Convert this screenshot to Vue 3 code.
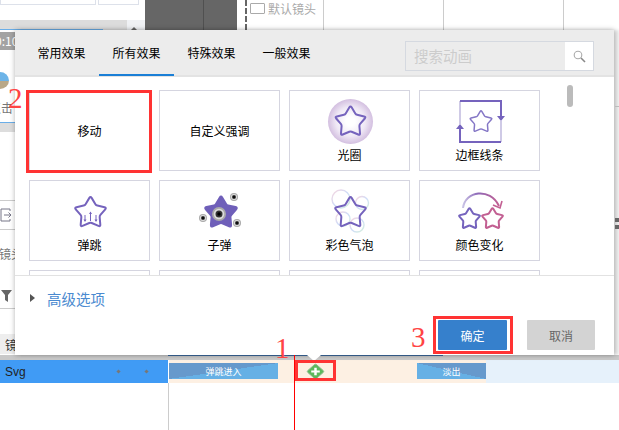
<template>
  <div class="app">
    <!-- page behind the dialog -->
    <div class="bg-top">
      <div class="top-left">
        <div class="top-boxes">
          <span class="box-a"></span>
          <span class="box-b"></span>
        </div>
        <div class="top-bar">
          <span class="bar-gray"><span class="bar-line"></span></span>
          <span class="bar-arrow"></span>
        </div>
      </div>
      <div class="dark-block">
        <span class="dark-a"></span>
        <span class="dark-b"></span>
      </div>
      <div class="dash"></div>
      <div class="cam">
        <span class="cam-icon"></span>
        <span class="cam-text">默认镜头</span>
      </div>
      <div class="ruler">
        <span v-for="n in 3" :key="n" class="ruler-cell"></span>
      </div>
    </div>

    <div class="bg-side">
      <div class="time">0:10</div>
      <div class="avatar"></div>
      <div class="side-txt click">点击</div>
      <div class="side-blue"></div>
      <div class="side-export">
        <svg width="12" height="14" viewBox="0 0 12 14">
          <path d="M10 3V1H1v12h9v-2M4 7h7M8.500 4.500 11 7l-2.500 2.500" fill="none" stroke="#778" stroke-width="1"/>
        </svg>
      </div>
      <div class="side-txt lens">镜头</div>
      <div class="side-filter">
        <svg width="11" height="12" viewBox="0 0 11 12"><path d="M0 0h11L7 5v7L4 10V5z" fill="#666"/></svg>
      </div>
      <div class="side-band">镜</div>
    </div>

    <div class="timeline">
      <div class="tl-shadow"><span class="tl-blue"></span></div>
      <div class="track">
        <div class="track-name">
          <span class="track-label">Svg</span>
          <span class="dot dot-a"></span>
          <span class="dot"></span>
        </div>
        <div class="lane">
          <div class="lane-active">
            <div class="clip clip-in">弹跳进入</div>
            <div class="add-slot">
              <svg width="19" height="17" viewBox="0 0 20 20" preserveAspectRatio="none">
                <rect x="3.500" y="3.500" width="13" height="13" rx="1.500" transform="rotate(45 10 10)" fill="#5cb85c" stroke="#8fb98f"/>
                <path d="M10 5.500v9M5.500 10h9" stroke="#fff" stroke-width="2.600"/>
              </svg>
            </div>
            <div class="clip clip-out">淡出</div>
          </div>
        </div>
      </div>
      <div class="tl-below"></div>
    </div>

    <!-- dialog -->
    <div class="dialog">
      <div class="tabs">
        <div
          v-for="tab in tabs"
          :key="tab"
          class="tab"
          :class="{ active: tab === activeTab }"
        >{{ tab }}</div>
        <div class="search">
          <span class="search-text">搜索动画</span>
          <span class="search-btn">
            <svg width="13" height="13" viewBox="0 0 13 13">
              <circle cx="5" cy="5" r="3.800" fill="none" stroke="#aaa" stroke-width="1.100"/>
              <path d="M8 8l4 4" stroke="#888" stroke-width="1.600"/>
            </svg>
          </span>
        </div>
      </div>

      <div class="body">
        <div class="grid">
          <div v-for="card in cards" :key="card.name + card.type" class="card" :class="{ plain: card.type === 'text' }">
            <svg v-if="card.type !== 'text'" class="icon" width="119" height="57" viewBox="0 0 119 57">
              <defs>
                <radialGradient id="halo">
                  <stop offset="0.2" stop-color="#fff"/>
                  <stop offset="0.65" stop-color="#efe8f5"/>
                  <stop offset="1" stop-color="#d3bfe0"/>
                </radialGradient>
                <linearGradient id="arc" x1="0" y1="0" x2="1" y2="0">
                  <stop offset="0" stop-color="#c9c3e6"/>
                  <stop offset="0.4" stop-color="#8d69b8"/>
                  <stop offset="1" stop-color="#c25f92"/>
                </linearGradient>
                <linearGradient id="bubble" x1="0" y1="0" x2="1" y2="1">
                  <stop offset="0" stop-color="#f8d6de"/>
                  <stop offset="0.5" stop-color="#cfdcf8"/>
                  <stop offset="1" stop-color="#d5f0dc"/>
                </linearGradient>
              </defs>

              <template v-if="card.type === 'halo'">
                <circle cx="60.500" cy="30.500" r="22.500" fill="url(#halo)"/>
                <path :d="star(60.500, 31, 16.500)" class="line"/>
              </template>

              <template v-if="card.type === 'border'">
                <path d="M40 10V33M81 30V51" fill="none" stroke="#cfcae6" stroke-width="2"/>
                <path d="M77 25h8l-4 5zM36 38h8l-4-5z" fill="#7563bd"/>
                <path d="M40 38V51H81M40 10H81V26" class="line" stroke-linejoin="miter"/>
                <path :d="star(61, 31, 12)" class="line thin"/>
              </template>

              <template v-if="card.type === 'bounce'">
                <path :d="star(60.500, 32, 17)" class="line"/>
                <path d="M55 34v6M60.500 31v9M66 34v6" stroke="#7563bd" stroke-width="1"/>
                <path d="M53.500 38.500 55 41l1.500-2.500zM59 33l1.500-2.500L62 33zM64.500 38.500 66 41l1.500-2.500z" fill="#7563bd"/>
              </template>

              <template v-if="card.type === 'bullet'">
                <path :d="star(61, 32, 17.500)" fill="#6f5fb9" stroke="#6f5fb9" stroke-width="2"/>
                <g v-for="h in holes" :key="h.x">
                  <circle :cx="h.x" :cy="h.y" :r="h.r" fill="#aaa"/>
                  <circle :cx="h.x" :cy="h.y" :r="h.r * 0.75" fill="#ddd"/>
                  <circle :cx="h.x" :cy="h.y" :r="h.r * 0.5" fill="#333"/>
                  <circle :cx="h.x" :cy="h.y" :r="h.r * 0.25" fill="#000"/>
                </g>
              </template>

              <template v-if="card.type === 'bubbles'">
                <circle v-for="b in bubbles" :key="b.x" :cx="b.x" :cy="b.y" :r="b.r" fill="#fff" fill-opacity="0.3" stroke="url(#bubble)" stroke-width="1.400"/>
                <path :d="star(60.500, 32, 17)" class="line"/>
              </template>

              <template v-if="card.type === 'color'">
                <path d="M43 27C45 10 70 6 79 25" fill="none" stroke="url(#arc)" stroke-width="2"/>
                <path d="M73 24l7 3 2-7" fill="none" stroke="#c25f92" stroke-width="1.600"/>
                <path :d="star(49.500, 38, 11.500)" class="line"/>
                <path :d="star(72.500, 38, 11.500)" class="line pink"/>
              </template>
            </svg>
            <span class="card-name">{{ card.name }}</span>
          </div>
        </div>
        <div class="scrollbar"></div>
      </div>

      <div class="footer">
        <div class="advanced">
          <span class="tri"></span>
          <span class="adv-text">高级选项</span>
        </div>
        <div class="actions">
          <button class="btn ok">确定</button>
          <button class="btn cancel">取消</button>
        </div>
      </div>
    </div>

    <!-- things drawn on top of the screenshot -->
    <div class="notch"></div>
    <div class="playhead"></div>
    <div class="mark mark-card"></div>
    <div class="mark mark-ok"></div>
    <div class="mark mark-add"></div>
    <span class="num num-1">1</span>
    <span class="num num-2">2</span>
    <span class="num num-3">3</span>
    <div class="right-bits">
      <span class="bit bit-line"></span>
      <span class="bit bit-dark"></span>
      <span class="bit bit-dark second"></span>
    </div>
  </div>
</template>

<script setup>
const tabs = ['常用效果', '所有效果', '特殊效果', '一般效果']
const activeTab = '所有效果'

const cards = [
  { name: '移动', type: 'text' },
  { name: '自定义强调', type: 'text' },
  { name: '光圈', type: 'halo' },
  { name: '边框线条', type: 'border' },
  { name: '弹跳', type: 'bounce' },
  { name: '子弹', type: 'bullet' },
  { name: '彩色气泡', type: 'bubbles' },
  { name: '颜色变化', type: 'color' },
  { name: '', type: 'text' },
  { name: ' ', type: 'text' },
  { name: '  ', type: 'text' },
  { name: '   ', type: 'text' }
]

const holes = [
  { x: 59, y: 33, r: 7 },
  { x: 74, y: 16, r: 4 },
  { x: 43, y: 37, r: 4 },
  { x: 77, y: 42, r: 4 }
]

const bubbles = [
  { x: 51, y: 18, r: 9 },
  { x: 72, y: 22, r: 6.500 },
  { x: 53, y: 38, r: 7 },
  { x: 67, y: 44, r: 7 }
]

// five point star with softened corners
function star(cx, cy, r, inner = 0.56) {
  const pts = []
  for (let i = 0; i < 10; i++) {
    const a = (-90 + i * 36) * Math.PI / 180
    const d = i % 2 ? r * inner : r
    pts.push([cx + Math.cos(a) * d, cy + Math.sin(a) * d])
  }
  let path = ''
  pts.forEach((p, i) => {
    const prev = pts[(i + 9) % 10]
    const next = pts[(i + 1) % 10]
    const k = i % 2 ? 0.12 : 0.2
    const a = [p[0] + (prev[0] - p[0]) * k, p[1] + (prev[1] - p[1]) * k]
    const b = [p[0] + (next[0] - p[0]) * k, p[1] + (next[1] - p[1]) * k]
    path += `${i ? 'L' : 'M'}${a[0].toFixed(2)} ${a[1].toFixed(2)}Q${p[0].toFixed(2)} ${p[1].toFixed(2)} ${b[0].toFixed(2)} ${b[1].toFixed(2)}`
  })
  return path + 'Z'
}
</script>

<style>
html, body {
  margin: 0;
  background: #fff;
}
</style>

<style scoped>
.app {
  position: relative;
  width: 619px;
  height: 430px;
  overflow: hidden;
  background: #fff;
  font-family: "Noto Sans CJK SC", "Liberation Sans", sans-serif;
  font-size: 12px;
  color: #000;
}

/* top strip */
.bg-top {
  display: flex;
  height: 30px;
}
.top-left {
  width: 145px;
  flex: none;
  display: flex;
  flex-direction: column;
}
.top-boxes {
  display: flex;
  height: 20px;
  gap: 2px;
}
.box-a, .box-b {
  height: 4px;
  border: 1px solid #dde1ea;
  border-top: 0;
}
.box-a { width: 94px; }
.box-b { width: 39px; }
.top-bar {
  display: flex;
  height: 10px;
  background: #eff1f4;
}
.bar-gray {
  display: flex;
  align-items: flex-end;
  width: 127px;
  background: #dcdcdc;
}
.bar-line {
  width: 103px;
  height: 1px;
  background: #6aaee8;
}
.bar-arrow {
  margin: 7px 0 0 4px;
  border: 3px solid transparent;
  border-top: 0;
  border-bottom: 3px solid #666;
  height: 0;
}
.dark-block {
  display: flex;
  flex: none;
  width: 92px;
  background: #666;
}
.dark-a {
  width: 58px;
  border-right: 1px solid #505050;
}
.dash {
  flex: none;
  width: 0;
  margin-left: 8px;
  border-left: 2px dashed #666;
}
.cam {
  display: flex;
  align-items: flex-start;
  flex: none;
  width: 76px;
  padding: 3px 0 0 3px;
  box-sizing: border-box;
  overflow: hidden;
}
.cam-icon {
  flex: none;
  width: 13px;
  height: 9px;
  border: 1px solid #aaa;
  border-radius: 1px;
}
.cam-text {
  margin: -1px 0 0 3px;
  color: #aaa;
  line-height: 14px;
  white-space: nowrap;
}
.ruler {
  display: flex;
  flex: 1;
  min-width: 0;
}
.ruler-cell {
  flex: none;
  width: 120px;
  border-left: 1px solid #ccc;
  box-sizing: border-box;
}

/* left edge, mostly hidden by the dialog */
.bg-side {
  display: flex;
  flex-direction: column;
  width: 15px;
  height: 325px;
  overflow: hidden;
  color: #777;
}
.time {
  height: 18px;
  margin-top: 2px;
  flex: none;
  background: #a3a3a3;
  color: #fff;
  line-height: 18px;
  text-indent: -5px;
  white-space: nowrap;
}
.avatar {
  width: 18px;
  height: 17px;
  margin: 22px 0 0 -9px;
  border-radius: 50%;
  background: linear-gradient(#6db4e8 55%, #b9a888 55%);
  flex: none;
}
.side-txt {
  white-space: nowrap;
  line-height: 14px;
  flex: none;
}
.click {
  margin: 12px 0 0 -11px;
}
.side-blue {
  height: 10px;
  margin-top: 7px;
  flex: none;
  background: #ddd;
  border-top: 1px solid #6aaee8;
  box-sizing: border-box;
}
.side-export {
  height: 28px;
  margin-top: 68px;
  flex: none;
  border-top: 1px solid #ccc;
  border-bottom: 1px solid #ccc;
  display: flex;
  align-items: center;
}
.lens {
  margin: 17px 0 0 -1px;
}
.side-filter {
  height: 20px;
  margin-top: 22px;
  padding: 5px 0 0 1px;
  flex: none;
  border-bottom: 1px solid #ccc;
  box-sizing: content-box;
}
.side-band {
  height: 20px;
  margin-top: 25px;
  flex: none;
  background: #eee;
  color: #333;
  line-height: 22px;
  padding-left: 5px;
}

/* timeline */
.timeline {
  display: flex;
  flex-direction: column;
  height: 75px;
}
.tl-shadow {
  height: 5px;
  flex: none;
  background: #c9c9c9;
  padding-left: 168px;
}
.tl-blue {
  display: block;
  width: 275px;
  height: 1px;
  background: #3d6a9e;
}
.track {
  display: flex;
  flex: none;
  height: 23px;
}
.track-name {
  display: flex;
  align-items: center;
  flex: none;
  width: 168px;
  background: #409bf5;
  color: #222;
  font-family: "Liberation Sans", sans-serif;
  font-size: 12px;
}
.track-label {
  margin-left: 5px;
}
.dot {
  width: 3px;
  height: 3px;
  margin-left: 25px;
  background: #777;
  transform: rotate(45deg);
}
.dot-a {
  margin-left: 91px;
}
.lane {
  flex: 1;
  margin-left: 1px;
  background: #e6f1fb;
}
.lane-active {
  display: flex;
  width: 317px;
  height: 23px;
  background: #fdf0e3;
}
.clip {
  flex: none;
  height: 16px;
  margin-top: 3px;
  color: #fff;
  font-size: 9px;
  line-height: 17px;
  text-align: center;
}
.clip-in {
  width: 109px;
  background: linear-gradient(to bottom right, #6699cc 50%, #66b0e5 50%);
}
.add-slot {
  flex: none;
  width: 139px;
  height: 23px;
  display: flex;
  align-items: center;
  padding-left: 28px;
  box-sizing: border-box;
}
.clip-out {
  width: 69px;
  background: linear-gradient(to top right, #66b0e5 50%, #6699cc 50%);
}
.tl-below {
  flex: 1;
  margin-left: 168px;
  border-left: 1px solid #ccc;
}

/* dialog */
.dialog {
  position: absolute;
  left: 15px;
  top: 30px;
  width: 599px;
  height: 325px;
  display: flex;
  flex-direction: column;
  background: #fff;
  box-shadow: 0 0 5px rgba(0, 0, 0, 0.3), 5px 0 3px rgba(0, 0, 0, 0.1);
}
.tabs {
  display: flex;
  flex: none;
  height: 47px;
  padding-left: 9px;
  background: #ececec;
  border-bottom: 2px solid #e3e3e3;
  box-sizing: border-box;
}
.tab {
  flex: none;
  width: 75px;
  height: 46px;
  line-height: 46px;
  text-align: center;
  box-sizing: border-box;
}
.tab.active {
  border-bottom: 2px solid #1a7fd6;
}
.search {
  display: flex;
  flex: none;
  width: 189px;
  height: 30px;
  margin: 11px 0 0 81px;
  border: 1px solid #d5d9e0;
  box-sizing: border-box;
}
.search-text {
  flex: 1;
  padding-left: 8px;
  color: #ccc;
  font-size: 14.500px;
  line-height: 28px;
}
.search-btn {
  display: flex;
  align-items: center;
  justify-content: center;
  width: 28px;
  background: #fff;
}
.body {
  display: flex;
  flex: none;
  height: 198px;
  overflow: hidden;
}
.grid {
  display: grid;
  grid-template-columns: repeat(4, 121px);
  grid-auto-rows: 81px;
  gap: 9px;
  padding: 13px 0 0 14px;
}
.card {
  display: flex;
  flex-direction: column;
  align-items: center;
  border: 1px solid #d5d5e0;
  box-sizing: border-box;
}
.card.plain {
  justify-content: center;
}
.icon {
  display: block;
  flex: none;
}
.card-name {
  line-height: 14px;
  white-space: pre;
}
.line {
  fill: none;
  stroke: #7563bd;
  stroke-width: 2;
}
.thin {
  stroke-width: 1.500;
  stroke: #8577c6;
}
.pink {
  stroke: #c25f92;
}
.scrollbar {
  width: 6px;
  height: 22px;
  margin: 8px 0 0 27px;
  flex: none;
  border-radius: 3px;
  background: #bbb;
}
.footer {
  flex: 1;
  border-top: 1px solid #e2e2e2;
}
.advanced {
  display: flex;
  align-items: center;
  height: 20px;
  margin: 12px 0 0 15px;
}
.tri {
  border: 4px solid transparent;
  border-left: 5px solid #555;
  border-right: 0;
}
.adv-text {
  margin-left: 12px;
  color: #4a8ad0;
  font-size: 14.500px;
}
.actions {
  display: flex;
  justify-content: flex-end;
  gap: 20px;
  margin: 12px 19px 0 0;
}
.btn {
  width: 69px;
  height: 30px;
  padding: 0;
  border: 0;
  border-radius: 1px;
  font: inherit;
  font-size: 12px;
}
.ok {
  background: #3680cc;
  color: #fff;
}
.cancel {
  width: 68px;
  background: #d3d3d3;
  color: #666;
}

/* annotations and overlays */
.notch {
  position: absolute;
  left: 307px;
  top: 355px;
  border: 7.500px solid transparent;
  border-top: 6px solid #fff;
  border-bottom: 0;
}
.playhead {
  position: absolute;
  left: 294px;
  top: 355px;
  width: 1px;
  height: 75px;
  background: #f00;
}
.mark {
  position: absolute;
  border: 3px solid #f33;
  box-sizing: border-box;
}
.mark-card {
  left: 26px;
  top: 90px;
  width: 126px;
  height: 83px;
}
.mark-ok {
  left: 433px;
  top: 316px;
  width: 80px;
  height: 38px;
}
.mark-add {
  left: 295px;
  top: 360px;
  width: 41px;
  height: 21px;
}
.num {
  position: absolute;
  color: #f44;
  font-family: "Liberation Serif", serif;
  font-size: 29px;
  line-height: 30px;
}
.num-1 { left: 275px; top: 333px; }
.num-2 { left: 8px; top: 83px; }
.num-3 { left: 411px; top: 322px; }
.right-bits {
  position: absolute;
  left: 615px;
  top: 106px;
  width: 4px;
}
.bit {
  display: block;
}
.bit-line {
  height: 1px;
  background: #bbb;
  margin-bottom: 111px;
}
.bit-dark {
  height: 4px;
  background: #666;
  margin-bottom: 3px;
}
</style>
